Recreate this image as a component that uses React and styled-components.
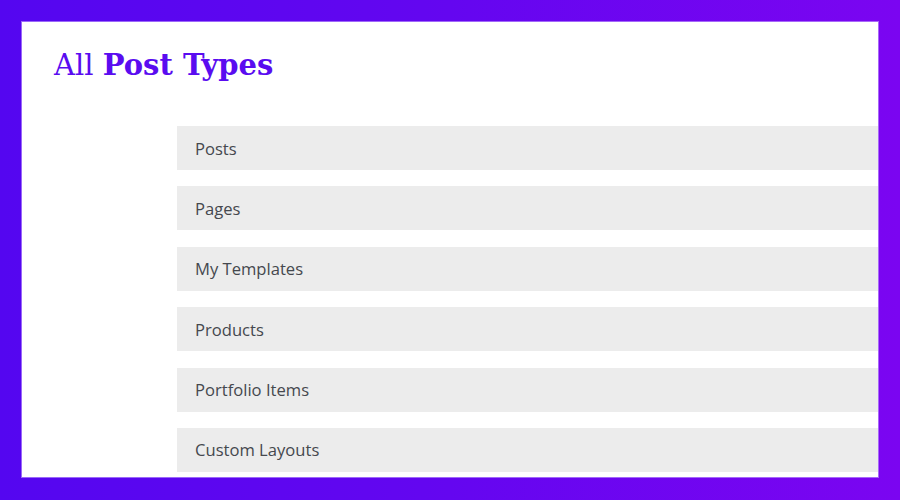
import React from "react";
import styled, {createGlobalStyle} from "styled-components";

const GlobalStyle = createGlobalStyle`
  html, body {
    margin: 0;
    padding: 0;
  }
  body {
    width: 900px;
    height: 500px;
    overflow: hidden;
  }
`;

const Frame = styled.div`
  width: 900px;
  height: 500px;
  box-sizing: border-box;
  padding: 22px 22px 23px 22px;
  background: linear-gradient(90deg, #5406f0 0%, #6406f0 50%, #7b05f1 100%);
`;

const Panel = styled.div`
  height: 100%;
  background: #fff;
  box-shadow: 0 0 0 1px rgba(200, 170, 255, 0.6);
  padding: 0 0 0 155px;
  box-sizing: border-box;
  display: flex;
  flex-direction: column;
`;

const Title = styled.h1`
  margin: 26px 0 0 -123px;
  height: 78px;
  font-family: "DejaVu Serif", serif;
  font-size: 29px;
  font-weight: 400;
  color: #5a0cf0;

  b {
    font-weight: 700;
  }
`;

const List = styled.div`
  display: flex;
  flex-direction: column;
  gap: 16.4px;
`;

const Row = styled.div`
  height: 44px;
  background: #ececec;
  display: flex;
  align-items: center;
  padding-left: 18px;
  font-family: "Open Sans", sans-serif;
  font-size: 16.6px;
  font-weight: 500;
  color: #45484e;
`;

const types = ["Posts", "Pages", "My Templates", "Products", "Portfolio Items", "Custom Layouts"];

export default function App() {
  return (
    <>
      <GlobalStyle />
      <Frame>
        <Panel>
          <Title>All <b>Post Types</b></Title>
          <List>
            {types.map((t) => (
              <Row key={t}>{t}</Row>
            ))}
          </List>
        </Panel>
      </Frame>
    </>
  );
}
